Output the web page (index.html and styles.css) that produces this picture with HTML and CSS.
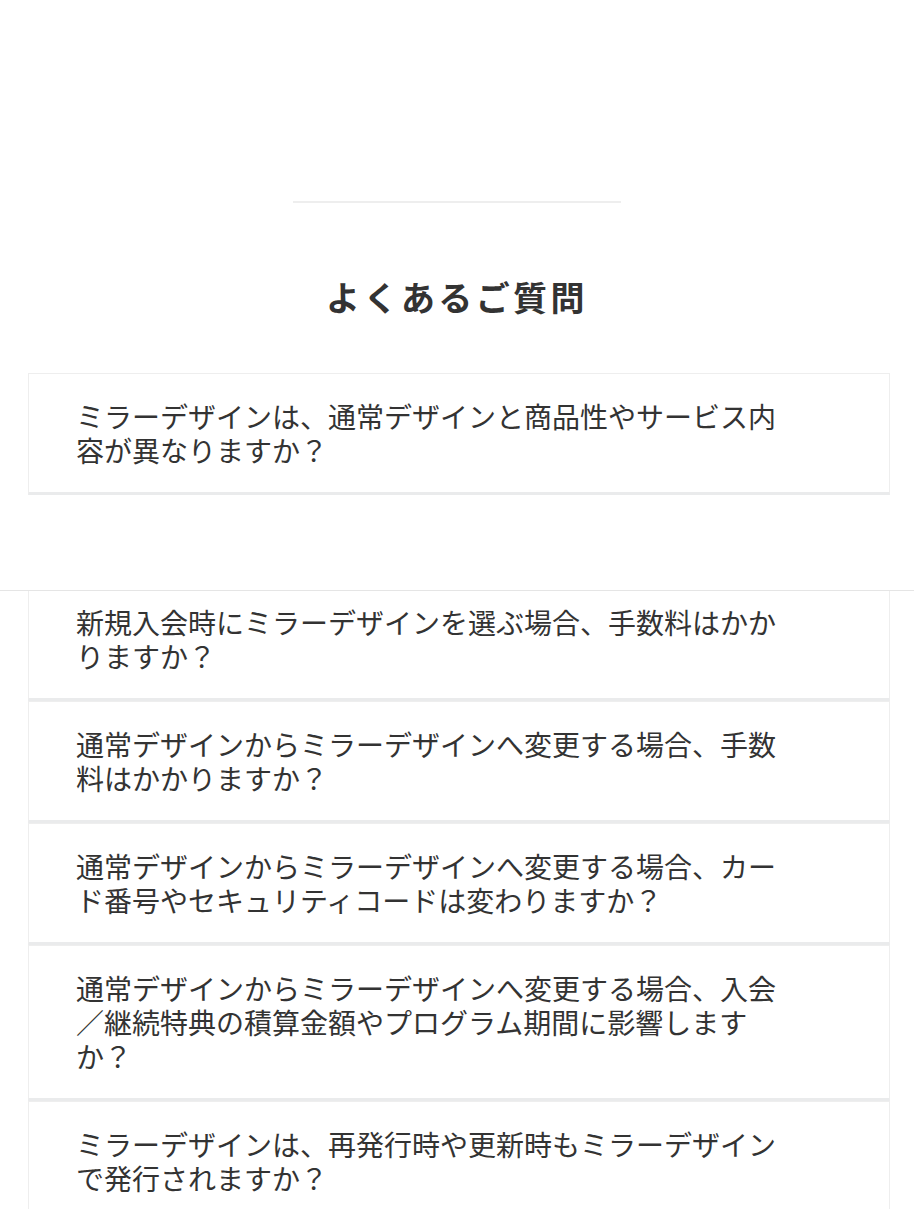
FILE: index.html
```html
<!DOCTYPE html>
<html lang="ja">

<head>
    <meta charset="UTF-8">
    <meta name="viewport" content="width=device-width, initial-scale=1.0">
    <title>よくあるご質問</title>
    <link rel="stylesheet" href="styles.css">
</head>

<body>
    <!-- 区切り線 -->
    <div class="top-space"></div>
    <div class="divider"></div>

    <h2 class="faq-title">よくあるご質問</h2>

    <!-- 質問リスト -->
    <div class="faq-list">
        <div class="faq-item">ミラーデザインは、通常デザインと商品性やサービス内容が異なりますか？</div>
    </div>

    <div class="sticky-bar"></div>

    <div class="faq-list">
        <div class="faq-item">新規入会時にミラーデザインを選ぶ場合、手数料はかかりますか？</div>
        <div class="faq-item">通常デザインからミラーデザインへ変更する場合、手数料はかかりますか？</div>
        <div class="faq-item">通常デザインからミラーデザインへ変更する場合、カード番号やセキュリティコードは変わりますか？</div>
        <div class="faq-item">通常デザインからミラーデザインへ変更する場合、入会／継続特典の積算金額やプログラム期間に影響しますか？</div>
        <div class="faq-item">ミラーデザインは、再発行時や更新時もミラーデザインで発行されますか？</div>
    </div>
</body>

</html>
```

FILE: styles.css
```css
body {
    margin: 0;
    background-color: #fff;
    color: #333;
    font-family: "Noto Sans CJK JP", "Noto Sans", sans-serif;
}

/* 上部の余白と区切り線 */
.top-space {
    height: 201px;
}

.divider {
    width: 328px;
    height: 2px;
    margin: 0 auto;
    background-color: #eee;
}

/* 見出し */
.faq-title {
    margin: 68px 0 51px;
    font-size: 34px;
    line-height: 51px;
    font-weight: 700;
    letter-spacing: 0.1em;
    text-align: center;
}

/* 質問リスト */
.faq-list {
    margin: 0 24px 0 28px;
}

.faq-item {
    padding: 25px 100px 25px 47px;
    border: 1px solid #eee;
    border-bottom: 3px solid #eaebec;
    font-size: 28px;
    line-height: 34px;
    background-color: #fff;
}

/* 固定バー（下のカードに重なる） */
.sticky-bar {
    position: relative;
    z-index: 1;
    height: 95px;
    margin-bottom: -12px;
    background-color: #fff;
    border-bottom: 1px solid #e5e5e5;
}
```
